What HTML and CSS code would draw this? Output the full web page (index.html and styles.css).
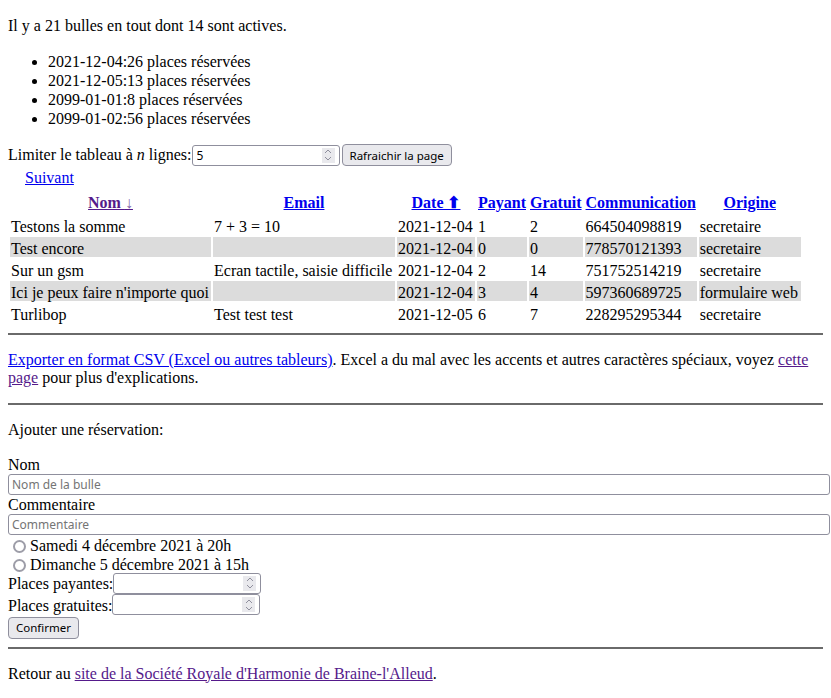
FILE: index.html
```html
<!DOCTYPE html>
<html lang="fr">
<head>
<meta charset="utf-8">
<title>Réservations</title>
<link rel="stylesheet" href="styles.css">
</head>
<body>
<p class="intro">Il y a 21 bulles en tout dont 14 sont actives.</p>
<ul class="stats">
<li>2021-12-04:26 places réservées</li>
<li>2021-12-05:13 places réservées</li>
<li>2099-01-01:8 places réservées</li>
<li>2099-01-02:56 places réservées</li>
</ul>
<form class="limit"><span>Limiter le tableau à <i>n</i> lignes:</span><span class="spin"><input type="text" value="5" class="ctl num"><span class="spinbox"><svg width="8" height="14" viewBox="0 0 8 14"><path d="M1 5 L4 2 L7 5 M1 9 L4 12 L7 9" fill="none" stroke="#8f8f9d" stroke-width="1"/></svg></span></span><button type="button" class="btn refresh">Rafraichir la page</button></form>
<div class="pager"><a href="#s">Suivant</a></div>
<table class="list">
<thead>
<tr>
<th class="c-nom"><a class="visited" href="#n">Nom <span class="arrow-down">↓</span></a></th>
<th class="c-email"><a href="#e">Email</a></th>
<th class="c-date"><a href="#d">Date ⬆</a></th>
<th class="c-pay"><a href="#p">Payant</a></th>
<th class="c-grat"><a href="#g">Gratuit</a></th>
<th class="c-comm"><a href="#c">Communication</a></th>
<th class="c-orig"><a href="#o">Origine</a></th>
</tr>
</thead>
<tbody>
<tr><td>Testons la somme</td><td>7 + 3 = 10</td><td>2021-12-04</td><td>1</td><td>2</td><td>664504098819</td><td>secretaire</td></tr>
<tr class="odd"><td>Test encore</td><td></td><td>2021-12-04</td><td>0</td><td>0</td><td>778570121393</td><td>secretaire</td></tr>
<tr><td>Sur un gsm</td><td>Ecran tactile, saisie difficile</td><td>2021-12-04</td><td>2</td><td>14</td><td>751752514219</td><td>secretaire</td></tr>
<tr class="odd"><td>Ici je peux faire n'importe quoi</td><td></td><td>2021-12-04</td><td>3</td><td>4</td><td>597360689725</td><td>formulaire web</td></tr>
<tr><td>Turlibop</td><td>Test test test</td><td>2021-12-05</td><td>6</td><td>7</td><td>228295295344</td><td>secretaire</td></tr>
</tbody>
</table>
<hr class="rule">
<p class="para"><a href="#csv">Exporter en format CSV (Excel ou autres tableurs)</a>. Excel a du mal avec les accents et autres caractères spéciaux, voyez <a class="visited" href="#page">cette</a> <a class="visited" href="#page">page</a> pour plus d'explications.</p>
<hr class="rule">
<p class="para">Ajouter une réservation:</p>
<form class="add">
<div class="lbl"><label for="nom">Nom</label></div>
<input type="text" id="nom" class="ctl wide" placeholder="Nom de la bulle">
<div class="lbl"><label for="com">Commentaire</label></div>
<input type="text" id="com" class="ctl wide" placeholder="Commentaire">
<div class="radio-row"><input type="radio" name="date" id="d1" class="radio"><label for="d1">Samedi 4 décembre 2021 à 20h</label></div>
<div class="radio-row"><input type="radio" name="date" id="d2" class="radio"><label for="d2">Dimanche 5 décembre 2021 à 15h</label></div>
<div class="num-row"><label for="pp">Places payantes:</label><span class="spin"><input type="text" id="pp" class="ctl num"><span class="spinbox"><svg width="8" height="14" viewBox="0 0 8 14"><path d="M1 5 L4 2 L7 5 M1 9 L4 12 L7 9" fill="none" stroke="#8f8f9d" stroke-width="1"/></svg></span></span></div>
<div class="num-row"><label for="pg">Places gratuites:</label><span class="spin"><input type="text" id="pg" class="ctl num"><span class="spinbox"><svg width="8" height="14" viewBox="0 0 8 14"><path d="M1 5 L4 2 L7 5 M1 9 L4 12 L7 9" fill="none" stroke="#8f8f9d" stroke-width="1"/></svg></span></span></div>
<div class="submit-row"><button type="button" class="btn">Confirmer</button></div>
</form>
<hr class="rule">
<p class="para">Retour au <a class="visited" href="#srh">site de la Société Royale d'Harmonie de Braine-l'Alleud</a>.</p>
</body>
</html>
```
FILE: styles.css
```css
html { background: #fff; }
body {
  margin: 0;
  padding: 8px;
  font-family: "Liberation Serif", "Times New Roman", serif;
  font-size: 16px;
  line-height: 18px;
  color: #000;
}
a { color: #0000ee; }
a.visited { color: #551a8b; }

.intro { margin: 9px 0 15px; }
.stats { margin: 16px 0; padding-left: 40px; }
.stats li { line-height: 17px; padding-top: 2px; }

.ctl {
  box-sizing: border-box;
  height: 21px;
  margin: 0;
  padding: 0 3px;
  border: 1px solid #8f8f9d;
  border-radius: 3px;
  background: #fff;
  color: #000;
  font-family: "Noto Sans", "Liberation Sans", sans-serif;
  font-size: 12px;
  outline: none;
}
.ctl::placeholder { color: #757575; }

.btn {
  box-sizing: border-box;
  height: 22px;
  margin: 0;
  padding: 0 7px;
  border: 1px solid #8f8f9d;
  border-radius: 4px;
  background: #e9e9ed;
  color: #000;
  font-family: "Noto Sans", "Liberation Sans", sans-serif;
  font-size: 11.5px;
}

.limit {
  display: flex;
  align-items: center;
  height: 24px;
  margin: 0;
}
.refresh { margin-left: 2px; }

.spin { position: relative; display: inline-block; height: 21px; }
.num { width: 148px; padding-left: 4px; }
.spinbox {
  position: absolute;
  top: 3px;
  right: 5px;
  width: 13px;
  height: 15px;
  background: #e9e9ed;
  display: flex;
  align-items: center;
  justify-content: center;
}

.pager { padding-left: 17px; padding-top: 3px; line-height: 15px; }

.list { border-spacing: 2px; margin: 0; }
.list th {
  line-height: 20px;
  padding: 6px 1px 0;
  font-weight: bold;
  text-align: center;
}
.list td { line-height: 16px; padding: 4px 1px 0; }
.list .odd td { background: #dcdcdc; }
.c-nom { width: 199px; }
.c-email { width: 180px; }
.c-date { width: 76px; }
.c-pay { width: 48px; }
.c-grat { width: 51px; }
.c-comm { width: 110px; }
.c-orig { width: 100px; }
.arrow-down { color: #7d62a8; }

.rule {
  height: 2px;
  margin: 8px 0;
  border: 0;
  background: #6a6a6a;
}
.para {
  margin: 12px 0 15.2px;
  padding-top: 4px;
  line-height: 18.4px;
}

.add { margin: 0; }
.lbl { line-height: 17.5px; padding-top: 1.5px; }
.wide { display: block; width: calc(100% + 7px); }
.radio-row {
  box-sizing: border-box;
  display: flex;
  align-items: center;
  height: 19px;
  padding-top: 4px;
}
.radio {
  appearance: none;
  box-sizing: border-box;
  width: 13px;
  height: 13px;
  margin: 0 4px 0 5px;
  border: 2px solid #9d9da8;
  border-radius: 50%;
  background: #fff;
}
.num-row {
  display: flex;
  align-items: center;
  height: 21.5px;
}
.num-row label { padding-top: 2px; }
.submit-row { display: flex; margin-top: 1px; height: 22px; }
```
